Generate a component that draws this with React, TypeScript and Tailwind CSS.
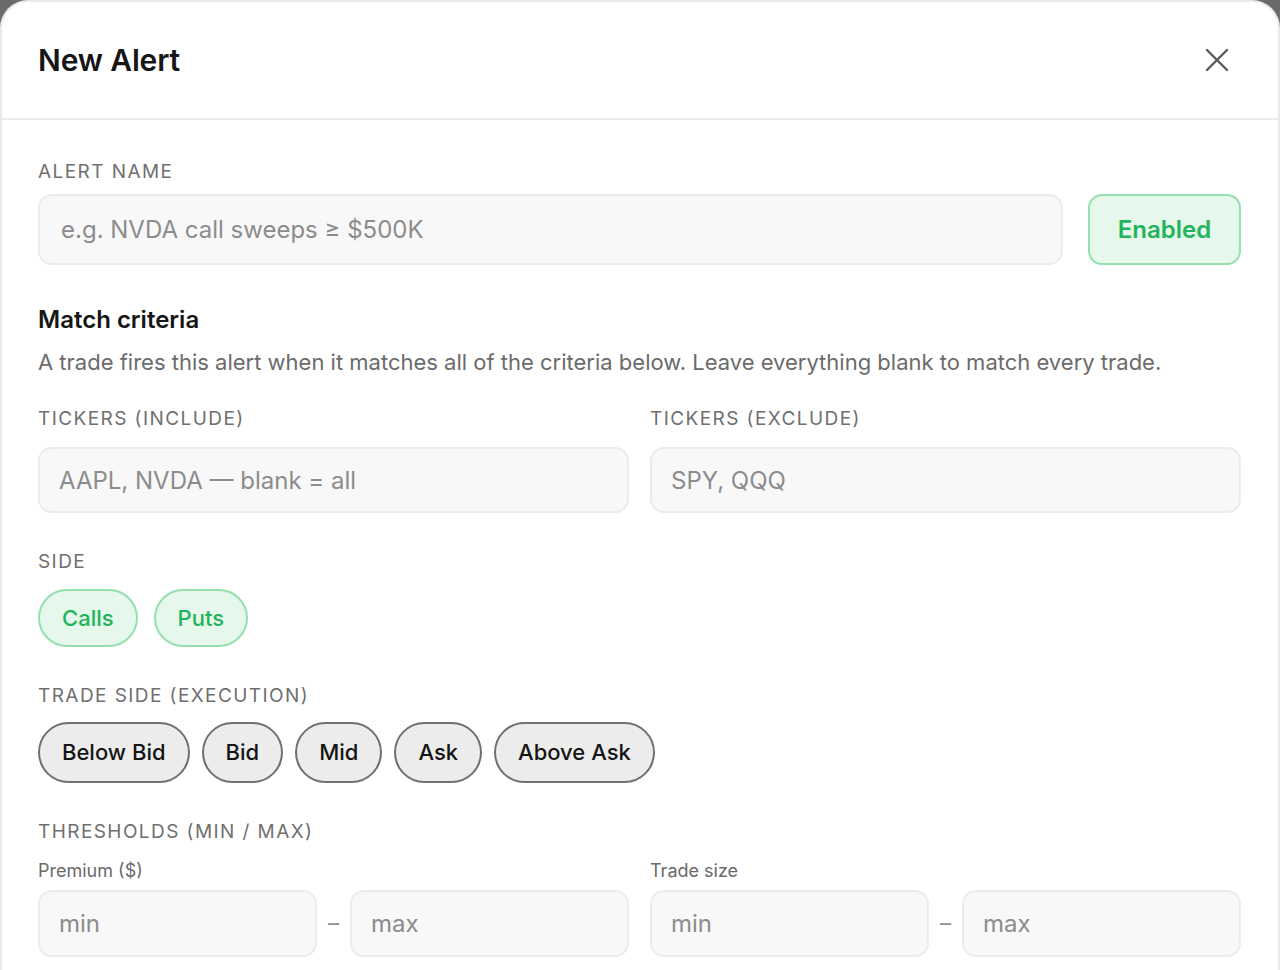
import React from "react";

const label = "block text-[19px] leading-6 tracking-[0.075em] text-[#6f6f6f] uppercase";
const field =
  "w-full rounded-[14px] border-2 border-[#ececec] bg-[#f8f8f8] px-[19px] text-[24px] text-[#222] placeholder:text-[#8c8c8c] outline-none";

function Pill({ children, tone }: { children: React.ReactNode; tone: "green" | "gray" }) {
  const cls =
    tone === "green"
      ? "h-[58px] px-[22px] rounded-full border-2 border-[#96dfae] bg-[#e6f7eb] text-[22px] font-medium text-[#22b45a]"
      : "h-[61px] px-[22px] rounded-full border-2 border-[#707070] bg-[#ececec] text-[22px] font-medium text-[#151515]";
  return (
    <button type="button" className={cls}>
      {children}
    </button>
  );
}

function RangeField({ title }: { title: string }) {
  return (
    <div>
      <div className="text-[18px] leading-[22px] text-[#6a6a6a]">{title}</div>
      <div className="mt-[8px] flex items-center">
        <input className={`${field} h-[67px] flex-1`} placeholder="min" />
        <span className="w-[33px] text-center text-[22px] text-[#8c8c8c]">–</span>
        <input className={`${field} h-[67px] flex-1`} placeholder="max" />
      </div>
    </div>
  );
}

export default function App() {
  return (
    <div
      className="h-[970px] overflow-hidden bg-[#6b6b6b]"
      style={{ fontFamily: "Inter, 'Noto Sans', sans-serif" }}
    >
      <div className="h-full rounded-t-[28px] border-2 border-b-0 border-[#e9e9e9] bg-white">
        {/* header */}
        <div className="flex h-[118px] items-center justify-between border-b-2 border-[#ececec] px-[36px]">
          <h1 className="text-[30px] font-semibold tracking-[-0.005em] text-[#161616]">New Alert</h1>
          <button type="button" className="mr-[13px] text-[#595959]" aria-label="Close">
            <svg width="24" height="24" viewBox="0 0 24 24" fill="none" stroke="currentColor" strokeWidth="2.4" strokeLinecap="round">
              <path d="M2 2 L22 22 M22 2 L2 22" />
            </svg>
          </button>
        </div>

        {/* body */}
        <div className="pl-[36px] pr-[37px] pt-[40px]">
          <label className={label}>Alert name</label>
          <div className="mt-[10px] flex gap-[25px]">
            <input className={`${field} h-[71px] flex-1 px-[21px]`} placeholder="e.g. NVDA call sweeps ≥ $500K" />
            <button
              type="button"
              className="h-[71px] w-[153px] rounded-[14px] border-2 border-[#96dfae] bg-[#e6f7eb] text-[24px] font-semibold text-[#22b45a]"
            >
              Enabled
            </button>
          </div>

          <h2 className="mt-[40px] text-[24px] leading-[30px] font-semibold text-[#161616]">Match criteria</h2>
          <p className="mt-[13px] text-[22px] leading-[28px] text-[#6b6b6b]">
            A trade fires this alert when it matches all of the criteria below. Leave everything blank to match every trade.
          </p>

          <div className="mt-[31px] grid grid-cols-2 gap-[21px]">
            <div>
              <label className={label}>Tickers (include)</label>
              <input className={`${field} mt-[16px] h-[66px]`} placeholder="AAPL, NVDA — blank = all" />
            </div>
            <div>
              <label className={label}>Tickers (exclude)</label>
              <input className={`${field} mt-[16px] h-[66px]`} placeholder="SPY, QQQ" />
            </div>
          </div>

          <label className={`${label} mt-[37px]`}>Side</label>
          <div className="mt-[15px] flex gap-[16px]">
            <Pill tone="green">Calls</Pill>
            <Pill tone="green">Puts</Pill>
          </div>

          <label className={`${label} mt-[37px]`}>Trade side (execution)</label>
          <div className="mt-[14px] flex gap-[12px]">
            {["Below Bid", "Bid", "Mid", "Ask", "Above Ask"].map((s) => (
              <Pill key={s} tone="gray">
                {s}
              </Pill>
            ))}
          </div>

          <label className={`${label} mt-[37px]`}>Thresholds (min / max)</label>
          <div className="mt-[16px] grid grid-cols-2 gap-[21px]">
            <RangeField title="Premium ($)" />
            <RangeField title="Trade size" />
          </div>
        </div>
      </div>
    </div>
  );
}
